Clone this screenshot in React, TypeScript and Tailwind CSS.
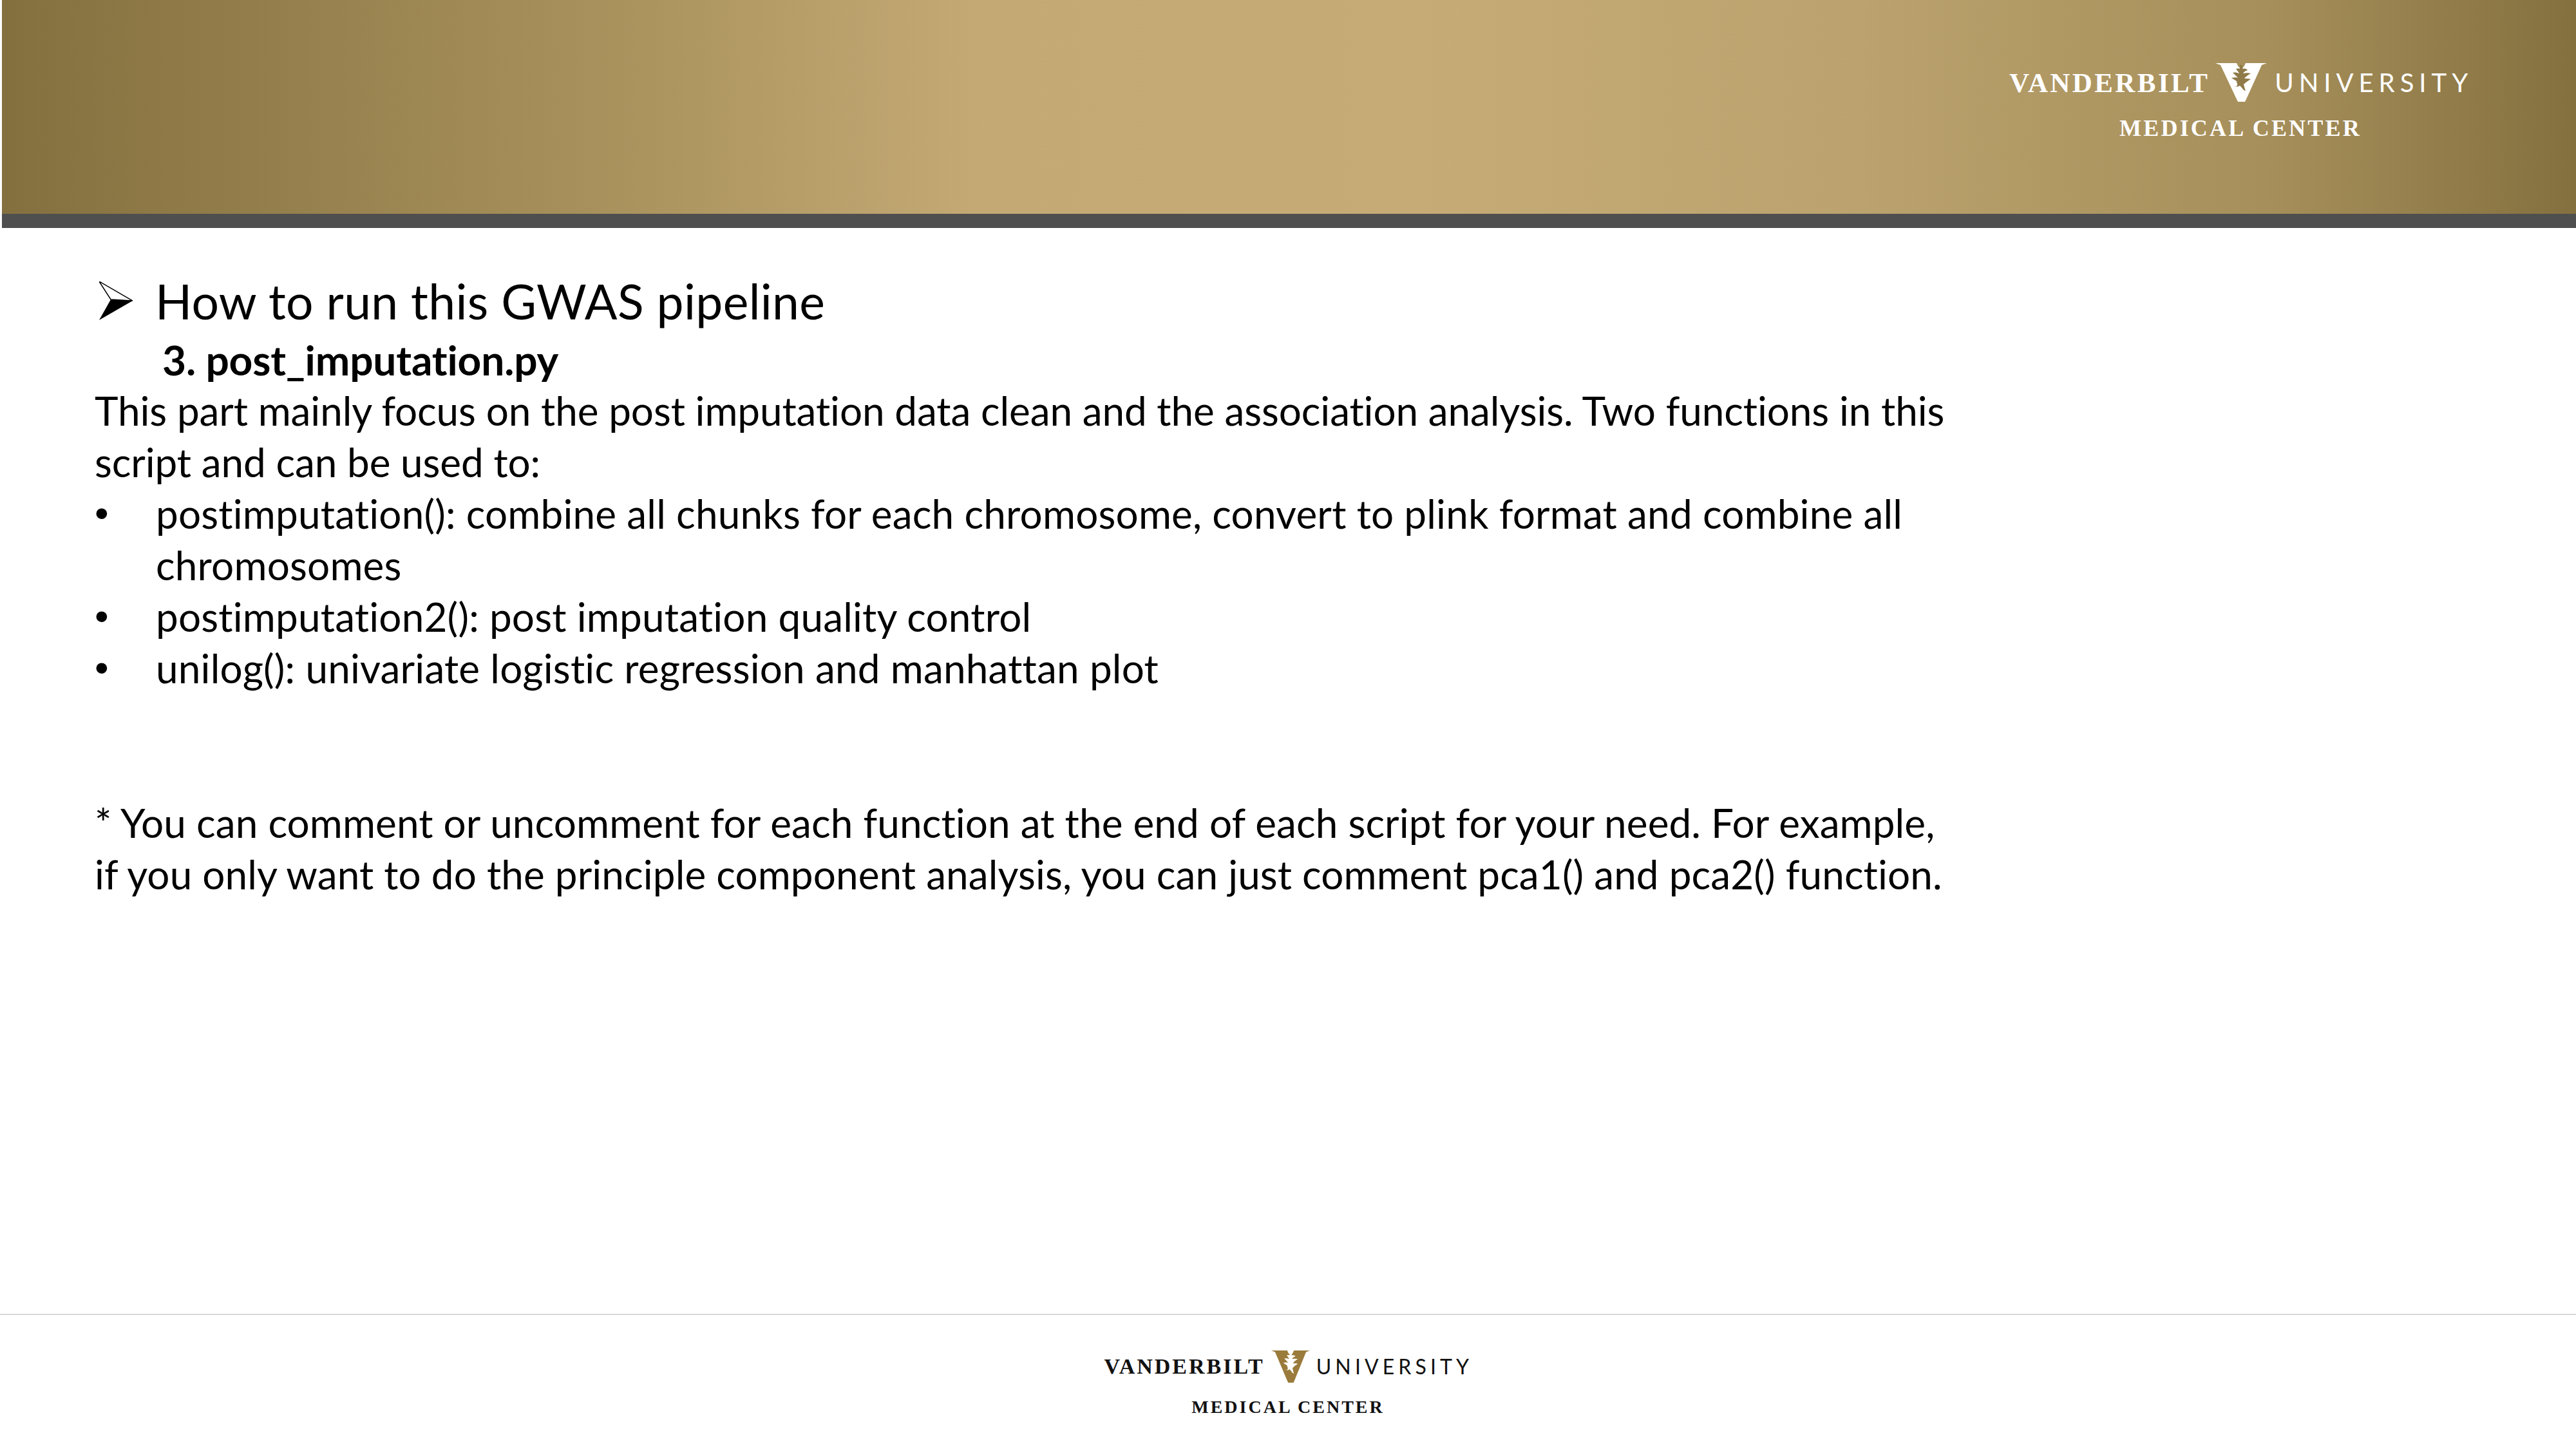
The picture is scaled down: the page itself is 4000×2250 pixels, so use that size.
function VMark({ cls, fill, leaf }: { cls: string; fill: string; leaf: string }) {
  return (
    <svg viewBox="0 0 80 60" preserveAspectRatio="none" className={cls}>
      <path d="M0 0H33L36 6L44 6L47 0H80L72 3L48 56L46 60H35L33 56L8 3Z" fill={fill} />
      <path
        d="M39 2C42 4 44 6 42 9C46 8 49 9 50 11C46 12 44 14 43 16C47 15 52 15 55 16C51 18 47 21 45 24C48 24 53 24 55 25C51 27 47 30 44 33C45 37 46 41 47 43L44 42C42 39 40 37 38 35C35 37 31 37 28 35C29 32 31 30 34 29C32 27 28 25 25 23C29 22 33 22 35 23C33 20 30 18 27 15C31 14 34 15 37 16C36 13 33 11 32 9C35 8 37 8 38 9C37 6 38 4 39 2Z"
        fill={leaf}
      />
      <circle cx="31" cy="33" r="3.2" fill={fill} />
    </svg>
  );
}

function Arrow() {
  return (
    <svg viewBox="0 0 52 60" className="w-[52px] h-[60px] shrink-0">
      <path d="M0 0L52 30L18 28Z" fill="#fff" stroke="#000" strokeWidth="1.5" />
      <path d="M0 60L52 30L18 28Z" fill="#000" />
    </svg>
  );
}

function Bullet({ children }: { children: React.ReactNode }) {
  return (
    <div className="flex">
      <span className="w-[95px] shrink-0 font-['Liberation_Sans',sans-serif]">•</span>
      <span className="whitespace-nowrap tracking-[0.2px]">{children}</span>
    </div>
  );
}

export default function App() {
  return (
    <div className="w-[4000px] h-[2250px] bg-white flex flex-col text-black font-['Lato','Liberation_Sans',sans-serif] overflow-hidden">
      <header className="pl-[3px] shrink-0">
        <div className="h-[332px] bg-[linear-gradient(90deg,#84703f_0%,#a68f5a_22%,#c4a975_38%,#c6ab76_55%,#bba26e_72%,#a68f5a_88%,#84703f_100%)] flex justify-end pr-[162px] pt-[98px]">
          <div className="w-[718px] flex flex-col items-center text-white font-['Liberation_Serif',serif]">
            <div className="flex items-center h-[60px] w-full">
              <span className="text-[43px] leading-none font-bold tracking-[3.4px] whitespace-nowrap">VANDERBILT</span>
              <VMark cls="w-[80px] h-[60px] shrink-0 ml-[9px] mr-[12px]" fill="#ffffff" leaf="#8f7a48" />
              <span className="text-[40px] leading-none font-['Lato',sans-serif] font-normal tracking-[8px] whitespace-nowrap">UNIVERSITY</span>
            </div>
            <div className="text-[36px] leading-none font-bold tracking-[3.2px] mt-[23px] whitespace-nowrap">MEDICAL CENTER</div>
          </div>
        </div>
        <div className="h-[22px] bg-[#4f4f4f]" />
      </header>

      <main className="flex-1 pl-[147px] pt-[80px] text-[62px] leading-[80px] tracking-[-0.08px]">
        <div className="flex items-center h-[66px] gap-[35px] pl-[7px]">
          <Arrow />
          <span className="text-[75px] leading-[66px] tracking-[0.35px] whitespace-nowrap">How to run this GWAS pipeline</span>
        </div>
        <div className="pl-[105px] text-[64px] font-bold h-[97px] leading-[118px] tracking-[-0.15px] whitespace-nowrap">3. post_imputation.py</div>
        <p className="whitespace-nowrap">
          This part mainly focus on the post imputation data clean and the association analysis. Two functions in this
          <br />
          script and can be used to:
        </p>
        <Bullet>
          postimputation(): combine all chunks for each chromosome, convert to plink format and combine all
          <br />
          chromosomes
        </Bullet>
        <Bullet>postimputation2(): post imputation quality control</Bullet>
        <Bullet>unilog(): univariate logistic regression and manhattan plot</Bullet>
        <p className="mt-[160px] whitespace-nowrap tracking-[0.12px]">
          * You can comment or uncomment for each function at the end of each script for your need. For example,
          <br />
          if you only want to do the principle component analysis, you can just comment pca1() and pca2() function.
        </p>
      </main>

      <footer className="h-[210px] shrink-0 border-t-2 border-[#d9d9d9] flex justify-center pt-[55px]">
        <div className="w-[571px] flex flex-col items-center font-['Liberation_Serif',serif] text-[#111]">
          <div className="flex items-center h-[50px] gap-[10px] w-full">
            <span className="text-[34px] leading-none font-bold tracking-[3px] whitespace-nowrap">VANDERBILT</span>
            <VMark cls="w-[60px] h-[50px] shrink-0" fill="#9a7b3b" leaf="#ffffff" />
            <span className="text-[32px] leading-none font-['Lato',sans-serif] font-normal tracking-[6.1px] whitespace-nowrap">UNIVERSITY</span>
          </div>
          <div className="text-[28px] leading-none font-bold tracking-[3px] mt-[24px] whitespace-nowrap">MEDICAL CENTER</div>
        </div>
      </footer>
    </div>
  );
}
